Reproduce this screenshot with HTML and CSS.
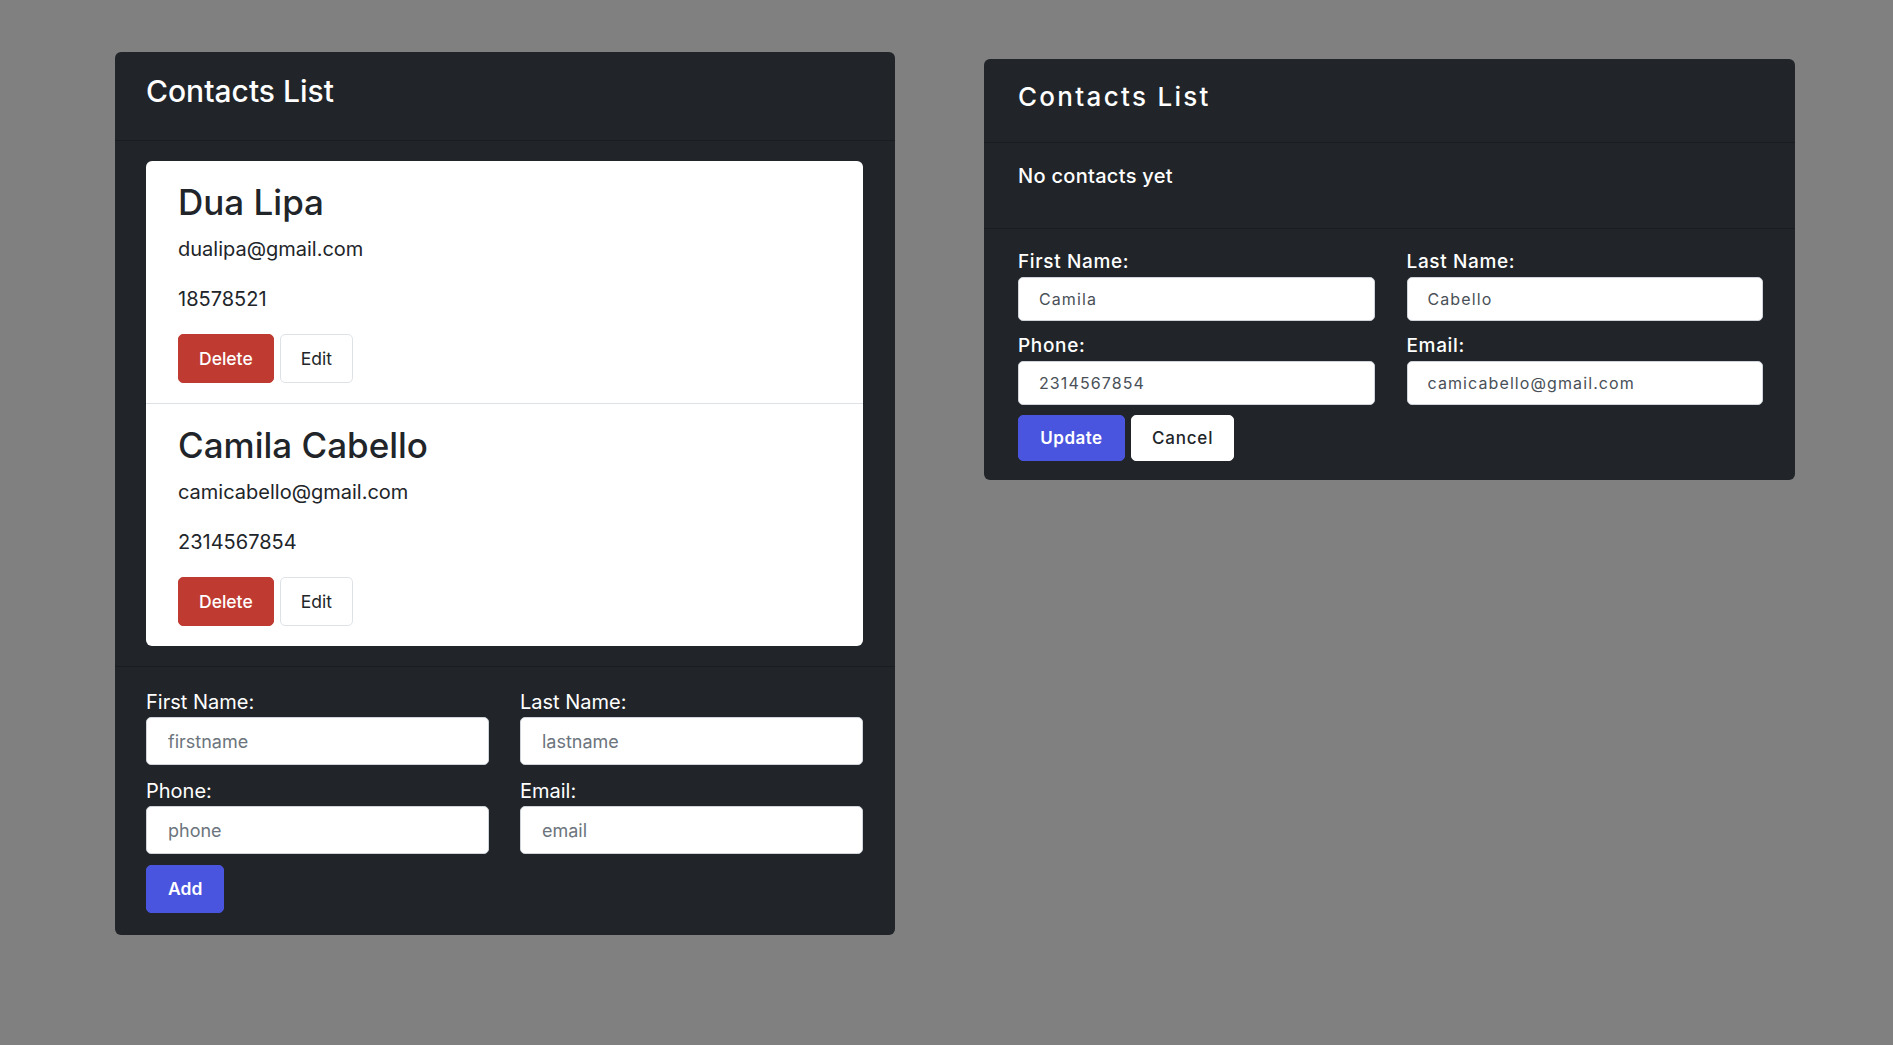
FILE: index.html
```html
<!DOCTYPE html>
<html lang="en">
<head>
<meta charset="utf-8">
<title>Contacts List</title>
<link rel="stylesheet" href="styles.css">
</head>
<body>
<div class="page">
  <section class="panel panel-main">
    <header class="panel-header">
      <h1 class="title">Contacts List</h1>
    </header>
    <div class="panel-body">
      <ul class="contact-list">
        <li class="contact">
          <h2 class="contact-name">Dua Lipa</h2>
          <p class="contact-line contact-email">dualipa@gmail.com</p>
          <p class="contact-line">18578521</p>
          <div class="actions">
            <button class="btn btn-delete" type="button">Delete</button>
            <button class="btn btn-edit" type="button">Edit</button>
          </div>
        </li>
        <li class="contact">
          <h2 class="contact-name">Camila Cabello</h2>
          <p class="contact-line contact-email">camicabello@gmail.com</p>
          <p class="contact-line">2314567854</p>
          <div class="actions">
            <button class="btn btn-delete" type="button">Delete</button>
            <button class="btn btn-edit" type="button">Edit</button>
          </div>
        </li>
      </ul>
    </div>
    <form class="panel-footer form-main">
      <div class="field">
        <label class="label">First Name:</label>
        <input class="input" type="text" placeholder="firstname">
      </div>
      <div class="field">
        <label class="label">Last Name:</label>
        <input class="input" type="text" placeholder="lastname">
      </div>
      <div class="field">
        <label class="label">Phone:</label>
        <input class="input" type="text" placeholder="phone">
      </div>
      <div class="field">
        <label class="label">Email:</label>
        <input class="input" type="text" placeholder="email">
      </div>
      <div class="form-actions">
        <button class="btn btn-primary" type="button">Add</button>
      </div>
    </form>
  </section>

  <section class="panel panel-edit">
    <header class="panel-header">
      <h1 class="title">Contacts List</h1>
    </header>
    <div class="panel-body">
      <p class="empty">No contacts yet</p>
    </div>
    <form class="panel-footer form-edit">
      <div class="field">
        <label class="label">First Name:</label>
        <input class="input" type="text" value="Camila">
      </div>
      <div class="field">
        <label class="label">Last Name:</label>
        <input class="input" type="text" value="Cabello">
      </div>
      <div class="field">
        <label class="label">Phone:</label>
        <input class="input" type="text" value="2314567854">
      </div>
      <div class="field">
        <label class="label">Email:</label>
        <input class="input" type="text" value="camicabello@gmail.com">
      </div>
      <div class="form-actions">
        <button class="btn btn-primary" type="button">Update</button>
        <button class="btn btn-cancel" type="button">Cancel</button>
      </div>
    </form>
  </section>
</div>
</body>
</html>
```

FILE: styles.css
```css
* {
  box-sizing: border-box;
}

html, body {
  margin: 0;
  padding: 0;
}

body {
  background: #808080;
  font-family: "Inter", "Noto Sans", sans-serif;
  color: #212529;
  min-height: 1045px;
}

.page {
  display: flex;
  align-items: flex-start;
  gap: 89px;
  padding: 52px 0 0 115px;
}

.panel {
  background: #212529;
  border-radius: 6px;
  color: #fff;
}

.panel-header,
.panel-body {
  border-bottom: 1px solid #1a1d20;
}

.title {
  margin: 0;
  font-weight: 500;
}

/* ---------- Left panel ---------- */
.panel-main {
  width: 780px;
}

.panel-main .panel-header {
  height: 89px;
  padding: 21px 32px 0 31px;
}

.panel-main .title {
  font-size: 30px;
  line-height: 36px;
}

.panel-main .panel-body {
  padding: 20px 32px 20px 31px;
}

.contact-list {
  list-style: none;
  margin: 0;
  padding: 0;
  background: #fff;
  border-radius: 6px;
  overflow: hidden;
}

.contact {
  padding: 20px 32px;
  border-bottom: 1px solid #dee2e6;
}

.contact:last-child {
  border-bottom: 0;
}

.contact-name {
  margin: 0 0 11px;
  font-size: 35px;
  line-height: 42px;
  font-weight: 500;
  color: #212529;
}

.contact-line {
  margin: 0 0 20px;
  font-size: 20px;
  line-height: 30px;
  color: #212529;
}

.actions {
  display: flex;
  gap: 6px;
}

.btn {
  font-family: inherit;
  border: 1px solid transparent;
  border-radius: 5px;
  cursor: pointer;
}

.panel-main .btn {
  font-size: 17.5px;
  line-height: 30px;
  padding: 8.5px 20px;
}

.btn-delete {
  background: #bf3a31;
  border-color: #bf3a31;
  color: #fff;
  font-weight: 500;
}

.btn-edit {
  background: #fff;
  border-color: #dee2e6;
  color: #212529;
  font-weight: 400;
}

.btn-primary {
  background: #4a55df;
  border-color: #4a55df;
  color: #fff;
  font-weight: 600;
}

.panel-footer {
  display: grid;
  grid-template-columns: 1fr 1fr;
  margin: 0;
}

.form-main {
  padding: 20px 32px 22px 31px;
  column-gap: 31px;
  row-gap: 11px;
}

.field {
  display: flex;
  flex-direction: column;
}

.form-actions {
  grid-column: 1 / -1;
  display: flex;
  gap: 6px;
}

.label {
  color: #fff;
}

.form-main .label {
  font-size: 20px;
  line-height: 30px;
}

.input {
  font-family: inherit;
  background: #fff;
  border: 1px solid #ced4da;
  border-radius: 5px;
  outline: none;
  width: 100%;
}

.form-main .input {
  height: 48px;
  padding: 0 21px;
  font-size: 18px;
  color: #212529;
}

.input::placeholder {
  color: #6c757d;
  opacity: 1;
}

.panel-main .btn-primary {
  padding: 8px 21px;
}

/* ---------- Right panel ---------- */
.panel-edit {
  width: 811px;
  margin-top: 7px;
}

.panel-edit .panel-header {
  height: 84px;
  padding: 22px 32px 0 34px;
}

.panel-edit .title {
  font-size: 26px;
  line-height: 31px;
  letter-spacing: 2.3px;
}

.panel-edit .panel-body {
  padding: 18px 32px 17px 34px;
}

.empty {
  margin: 0 0 20px;
  font-size: 20px;
  line-height: 30px;
  font-weight: 500;
  letter-spacing: 0.3px;
}

.form-edit {
  padding: 17px 32px 19px 34px;
  column-gap: 32px;
  row-gap: 9px;
}

.form-edit .label {
  font-size: 19px;
  line-height: 31px;
  font-weight: 500;
  letter-spacing: 0.65px;
}

.form-edit .input {
  height: 44px;
  padding: 0 20px;
  font-size: 16px;
  letter-spacing: 1.1px;
  color: #495057;
}

.form-edit .form-actions {
  margin-top: 1px;
}

.form-edit .btn {
  height: 46px;
  font-size: 17px;
  line-height: 26px;
  padding: 0 20px;
}

.form-edit .btn-primary {
  width: 107px;
  padding: 0;
  letter-spacing: 0.5px;
}

.btn-cancel {
  width: 103px;
  padding: 0;
  background: #fff;
  border-color: #fff;
  color: #212529;
  font-weight: 500;
  letter-spacing: 0.8px;
}
```
